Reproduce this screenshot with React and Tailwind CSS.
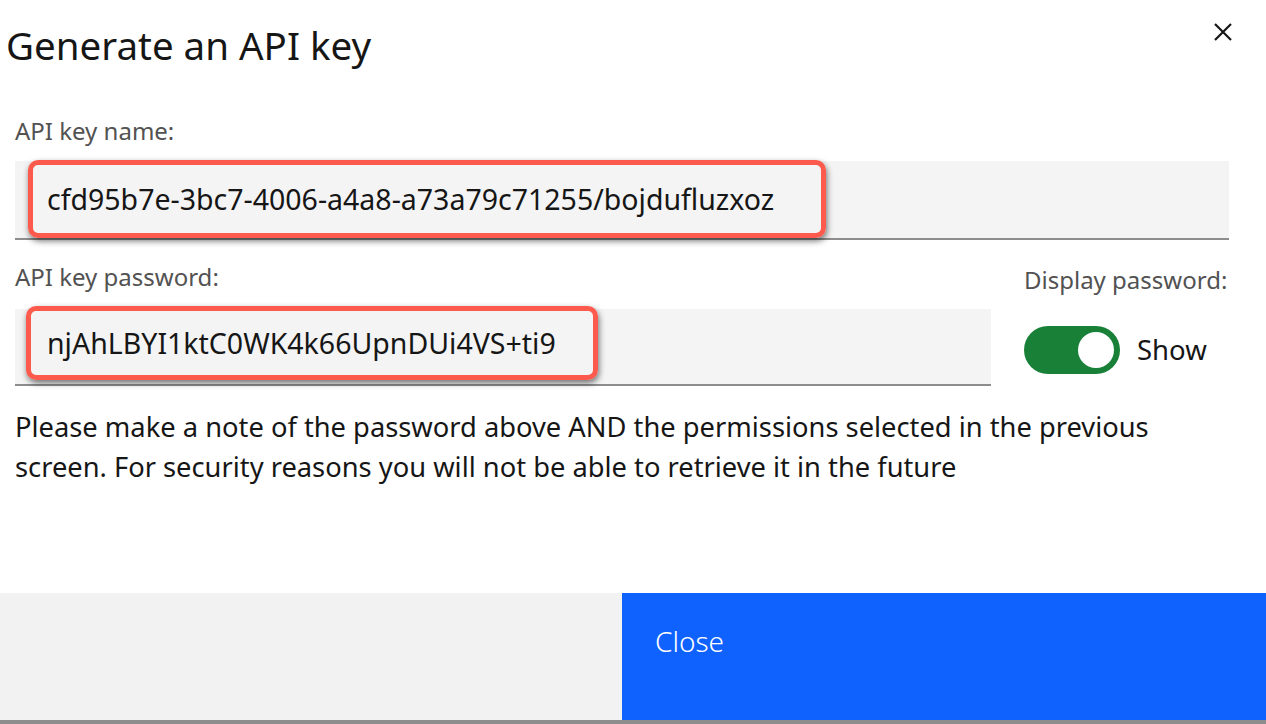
import { useState } from "react";

export default function App() {
    const [show, setShow] = useState(true);
    return (
        <div className="w-[1266px] h-[724px] bg-white flex flex-col font-['Noto_Sans',sans-serif] text-[#161616]">
            {/* Header */}
            <div className="flex justify-between items-start pl-[6px] pr-[33px] pt-[18px] h-[113px]">
                <h2 className="text-[38.5px] leading-[54px] font-normal">Generate an API key</h2>
                <button className="mt-[4px] w-[20px] h-[20px] flex items-center justify-center">
                    <svg width="20" height="20" viewBox="0 0 20 20">
                        <path d="M2 2 L18 18 M18 2 L2 18" stroke="#161616" strokeWidth="2.2" fill="none" />
                    </svg>
                </button>
            </div>

            {/* Body */}
            <div className="pl-[15px] pr-[37px] flex flex-col">
                <label className="text-[24px] leading-[36px] text-[#525252]">API key name:</label>
                <div className="mt-[12px] h-[79px] bg-[#f4f4f4] border-b-2 border-[#8d8d8d] flex items-start">
                    <div className="ml-[13px] w-[798px] h-[78px] -mt-[1px] border-[5px] border-[#fb5a4d] rounded-[10px] shadow-[1px_3px_6px_rgba(0,0,0,0.55)] flex items-center pl-[14px] text-[28.5px] leading-[36px]">
                        cfd95b7e-3bc7-4006-a4a8-a73a79c71255/bojdufluzxoz
                    </div>
                </div>

                <div className="flex gap-[33px] mt-[19px]">
                    <div className="flex-1 flex flex-col">
                        <label className="text-[24px] leading-[36px] text-[#525252]">API key password:</label>
                        <div className="mt-[14px] h-[77px] bg-[#f4f4f4] border-b-2 border-[#8d8d8d] flex items-start">
                            <div className="ml-[11px] w-[572px] h-[74px] -mt-[3px] border-[5px] border-[#fb5a4d] rounded-[10px] shadow-[1px_3px_6px_rgba(0,0,0,0.55)] flex items-center pl-[16px] text-[28.5px] leading-[36px]">
                                njAhLBYI1ktC0WK4k66UpnDUi4VS+ti9
                            </div>
                        </div>
                    </div>
                    <div className="w-[205px] flex flex-col">
                        <label className="text-[24px] leading-[36px] text-[#525252] mt-[3px] whitespace-nowrap">Display password:</label>
                        <div className="mt-[28px] flex items-center gap-[17px]">
                            <button
                                onClick={() => setShow(!show)}
                                className={"w-[96px] h-[48px] rounded-full flex items-center px-[6px] " + (show ? "bg-[#198038] justify-end" : "bg-[#8d8d8d] justify-start")}
                            >
                                <span className="w-[36px] h-[36px] rounded-full bg-white"></span>
                            </button>
                            <span className="text-[27.5px] leading-[36px]">Show</span>
                        </div>
                    </div>
                </div>

                <p className="mt-[21px] text-[27.3px] leading-[40px]">
                    Please make a note of the password above AND the permissions selected in the previous<br />
                    screen. For security reasons you will not be able to retrieve it in the future
                </p>
            </div>

            {/* Footer */}
            <div className="mt-auto h-[131px] flex border-b-4 border-[#8d8d8d]">
                <div className="w-[622px] bg-[#f2f2f2]"></div>
                <button className="flex-1 bg-[#0f62fe] text-white text-[28px] leading-[36px] text-left pl-[33px] pt-[30px] flex items-start font-light">Close</button>
            </div>
        </div>
    );
}
